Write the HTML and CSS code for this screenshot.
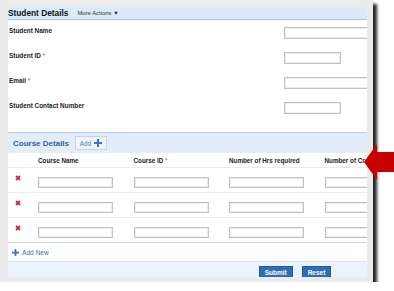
FILE: index.html
```html
<!DOCTYPE html>
<html lang="en">
<head>
  <meta charset="UTF-8">
  <meta name="viewport" content="width=device-width, initial-scale=1.0">
  <title>Student Details</title>
  <link rel="stylesheet" href="styles.css">
</head>
<body>
  <div class="frame">
    <div class="window">
      <div class="page">
        <div class="page-head">
          <span class="title">Student Details</span>
          <span class="more">More Actions &#9660;</span>
        </div>

        <div class="student-form">
          <div class="field">
            <label for="s-name">Student Name</label>
            <input class="txt wide" type="text" id="s-name">
          </div>
          <div class="field">
            <label for="s-id">Student ID <span class="req">*</span></label>
            <input class="txt short" type="text" id="s-id">
          </div>
          <div class="field">
            <label for="s-mail">Email <span class="req">*</span></label>
            <input class="txt wide" type="text" id="s-mail">
          </div>
          <div class="field">
            <label for="s-phone">Student Contact Number</label>
            <input class="txt short" type="text" id="s-phone">
          </div>
        </div>

        <div class="course-head">
          <span class="sub">Course Details</span>
          <span class="add">Add
            <svg width="8" height="8" viewBox="0 0 8 8"><path d="M3 0h2v3h3v2H5v3H3V5H0V3h3z" fill="#3a74bb"/></svg>
          </span>
        </div>

        <div class="row head">
          <span></span>
          <span>Course Name</span>
          <span>Course ID <span class="req">*</span></span>
          <span>Number of Hrs required</span>
          <span>Number of Credits</span>
        </div>
        <div class="row">
          <span class="del"><svg width="6" height="6" viewBox="0 0 6 6"><path d="M1 1l4 4M5 1L1 5" stroke="#d9262b" stroke-width="1.8"/></svg></span>
          <span><input class="txt cell" type="text"></span>
          <span><input class="txt cell" type="text"></span>
          <span><input class="txt cell" type="text"></span>
          <span><input class="txt cell" type="text"></span>
        </div>
        <div class="row">
          <span class="del"><svg width="6" height="6" viewBox="0 0 6 6"><path d="M1 1l4 4M5 1L1 5" stroke="#d9262b" stroke-width="1.8"/></svg></span>
          <span><input class="txt cell" type="text"></span>
          <span><input class="txt cell" type="text"></span>
          <span><input class="txt cell" type="text"></span>
          <span><input class="txt cell" type="text"></span>
        </div>
        <div class="row last">
          <span class="del"><svg width="6" height="6" viewBox="0 0 6 6"><path d="M1 1l4 4M5 1L1 5" stroke="#d9262b" stroke-width="1.8"/></svg></span>
          <span><input class="txt cell" type="text"></span>
          <span><input class="txt cell" type="text"></span>
          <span><input class="txt cell" type="text"></span>
          <span><input class="txt cell" type="text"></span>
        </div>

        <div class="add-new">
          <svg width="7" height="7" viewBox="0 0 8 8"><path d="M3 0h2v3h3v2H5v3H3V5H0V3h3z" fill="#3a74bb"/></svg>
          Add New
        </div>

        <div class="footer">
          <button class="btn">Submit</button>
          <button class="btn">Reset</button>
        </div>
      </div>
    </div>
  </div>

  <svg class="arrow" width="34" height="44" viewBox="0 0 34 44">
    <polygon points="4,22 17,4 17,12 34,12 34,32 17,32 17,40" fill="#c80000"/>
  </svg>
</body>
</html>
```

FILE: styles.css
```css
body {
  margin: 0;
  padding: 0;
  background: #fff;
  font-family: 'Liberation Sans', Arial, sans-serif;
  color: #222;
}

.frame {
  width: 373px;
  height: 282px;
  box-sizing: border-box;
  padding: 7px 6px 5px 8px;
  background: #ebebeb;
  box-shadow: 4px 4px 3px rgba(0, 0, 0, 0.85);
}

.window {
  width: 359px;
  height: 270px;
  overflow: hidden;
  background: #fff;
}

.page {
  width: 574px;
}

/* top bar */
.page-head {
  height: 12px;
  display: flex;
  align-items: center;
  background: #d9eafa;
  border-bottom: 1px solid #a6c7e8;
}

.title {
  font-size: 8.3px;
  font-weight: bold;
  color: #111;
}

.more {
  margin-left: 9px;
  font-size: 5.9px;
  color: #333;
}

/* student form */
.student-form {
  padding-bottom: 12px;
}

.field {
  height: 25px;
  box-sizing: border-box;
  padding-top: 7px;
  display: flex;
  align-items: flex-start;
}

.field label {
  width: 276px;
  box-sizing: border-box;
  padding-left: 1px;
  margin-top: -1px;
  line-height: 9px;
  font-size: 6.4px;
  font-weight: bold;
  color: #222;
}

.req {
  color: #e0393a;
  font-weight: normal;
}

.txt {
  height: 11px;
  box-sizing: border-box;
  margin: 0;
  padding: 0;
  border: 1px solid #c2c2c2;
  box-shadow: inset 0 0 0 1px #ededed;
  background: #fff;
}

.txt.wide {
  width: 120px;
  height: 12px;
}

.txt.short {
  width: 57px;
  height: 12px;
}

/* course section */
.course-head {
  height: 20px;
  display: flex;
  align-items: center;
  padding-left: 5px;
  background: #e3edf9;
  border-top: 1px solid #b2cfee;
}

.sub {
  font-size: 8px;
  font-weight: bold;
  color: #2d62a6;
}

.add {
  margin-left: 6px;
  width: 32px;
  height: 14px;
  box-sizing: border-box;
  display: flex;
  align-items: center;
  justify-content: center;
  gap: 3px;
  font-size: 6.4px;
  color: #5f7fa6;
  background: #edf3fb;
  border: 1px solid #c3d5ea;
}

.row {
  height: 25px;
  box-sizing: border-box;
  display: grid;
  grid-template-columns: 30px repeat(4, 95.5px);
  align-items: start;
  padding-top: 5px;
  border-bottom: 1px solid #e3ebf4;
}

.row.head {
  height: 15px;
  padding-top: 0;
  align-items: center;
  font-size: 6.3px;
  font-weight: bold;
  color: #222;
}

.row.last {
  border-bottom: 1px solid #c0d6ee;
}

.del {
  padding-left: 7px;
  padding-top: 2px;
  display: flex;
}

.txt.cell {
  width: 75px;
}

.add-new {
  height: 19px;
  box-sizing: border-box;
  display: flex;
  align-items: center;
  gap: 3px;
  padding-left: 4px;
  font-size: 6.6px;
  color: #3a72b8;
  border-bottom: 1px solid #d3e3f4;
}

.footer {
  height: 20px;
  display: flex;
  justify-content: center;
  gap: 9px;
  padding-top: 4px;
  background: #eaf2fb;
}

.btn {
  height: 13px;
  padding: 0 5px;
  font-family: 'Liberation Sans', Arial, sans-serif;
  font-size: 6.5px;
  font-weight: bold;
  color: #fff;
  background: #2f6cb4;
  border: 1px solid #24589a;
}

/* callout arrow over the screenshot */
.arrow {
  position: absolute;
  left: 360px;
  top: 140px;
}
```
